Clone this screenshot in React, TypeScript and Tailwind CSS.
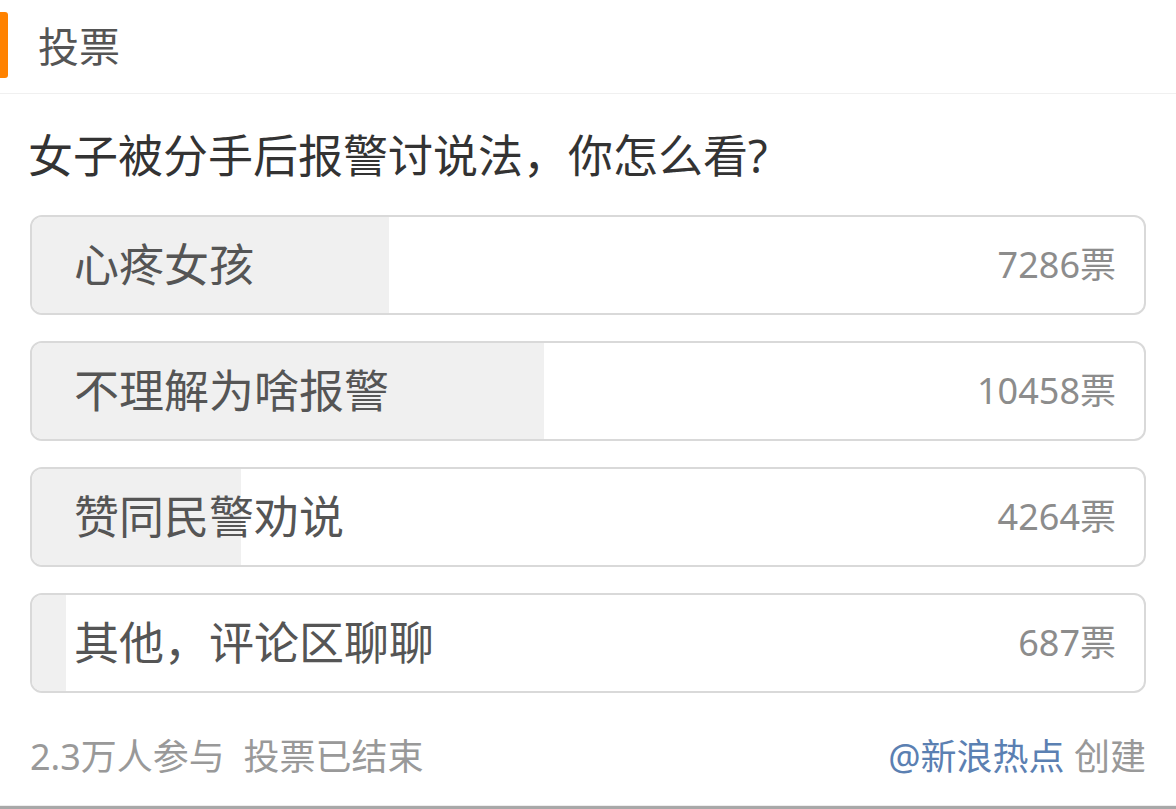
import React from 'react';

const options = [
  { label: '心疼女孩', votes: 7286 },
  { label: '不理解为啥报警', votes: 10458 },
  { label: '赞同民警劝说', votes: 4264 },
  { label: '其他，评论区聊聊', votes: 687 },
];

const font = "font-['Noto_Sans','Noto_Sans_CJK_SC',sans-serif]";

const App: React.FC = () => {
  const total = options.reduce((s, o) => s + o.votes, 0);

  return (
    <div className={`w-[1176px] h-[809px] bg-white overflow-hidden flex flex-col ${font}`}>
      {/* header */}
      <div className="h-[94px] shrink-0 flex items-center border-b border-[#f0f0f0]">
        <div className="w-2 h-[66px] -mt-[4px] bg-[#ff8200] rounded-r-[3px]"></div>
        <span className="ml-[30px] text-[41px] leading-none text-[#555]">投票</span>
      </div>

      <div className="px-[30px] flex-1 flex flex-col">
        <p className="pt-[34px] -ml-[2px] text-[45px] leading-[56px] text-[#333]">女子被分手后报警讨说法，你怎么看?</p>

        <div className="mt-[31px] flex flex-col gap-[26px]">
          {options.map(o => (
            <div key={o.label} className="relative h-[100px] rounded-[12px] border-2 border-[#d9d9d9] overflow-hidden">
              <div className="absolute inset-y-0 left-0 bg-[#f0f0f0]" style={{ width: `${(o.votes / total) * 100}%` }}></div>
              <div className="relative h-full flex items-center justify-between pl-[42px] pr-[28px]">
                <span className="text-[45px] text-[#555]">{o.label}</span>
                <span className="text-[36px] text-[#8c8c8c]">{o.votes}票</span>
              </div>
            </div>
          ))}
        </div>

        <div className="mt-[40px] flex items-center justify-between text-[36px] leading-[48px]">
          <span className="text-[#999]">2.3万人参与&nbsp;&nbsp;投票已结束</span>
          <span>
            <span className="text-[#5b80b2]">@新浪热点</span>
            <span className="text-[#999]"> 创建</span>
          </span>
        </div>
      </div>

      <div className="h-[4px] shrink-0 border-t border-[#eee] bg-[#a8a8a8]"></div>
    </div>
  );
};

export default App;
